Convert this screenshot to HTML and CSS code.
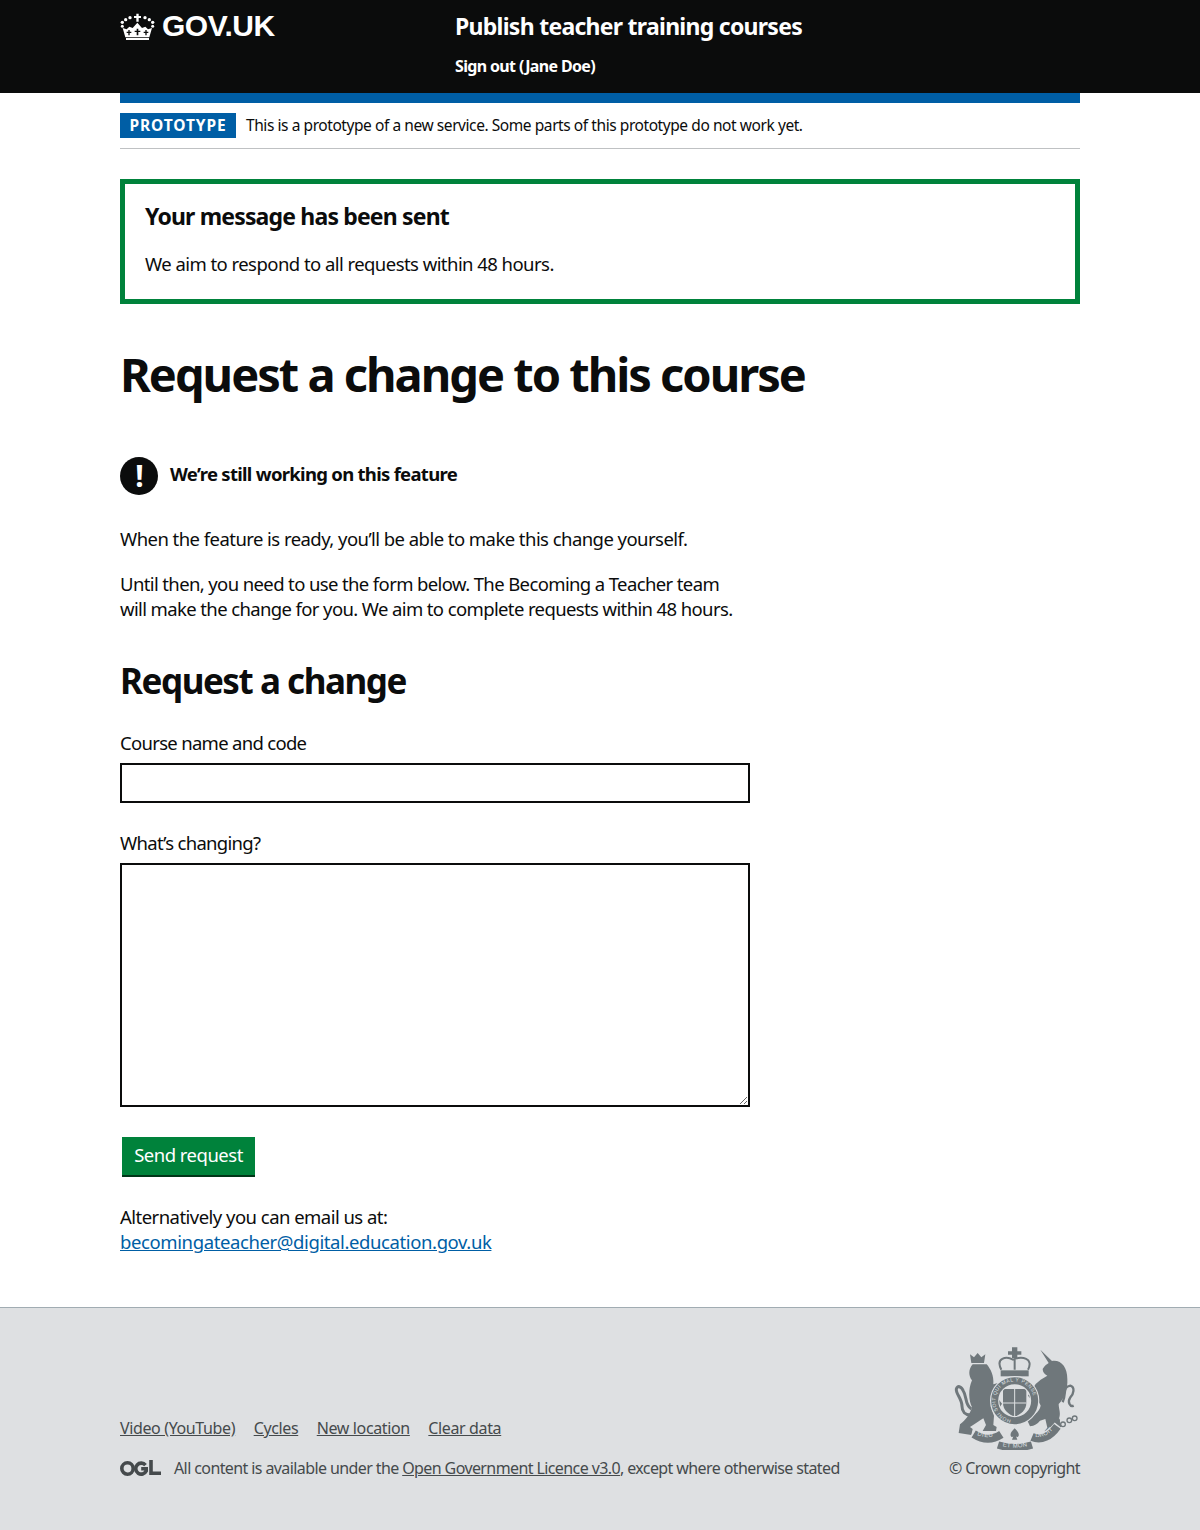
FILE: index.html
```html
<!DOCTYPE html>
<html lang="en">
<head>
    <meta charset="UTF-8">
    <meta name="viewport" content="width=device-width, initial-scale=1.0">
    <title>Request a change to this course</title>
    <link rel="stylesheet" href="styles.css">
</head>
<body>
    <header class="site-header">
        <div class="header-inner">
            <a class="logo" href="#">
                <svg class="crown" viewBox="30 33 105 81" width="35" height="27" aria-hidden="true">
                    <g fill="#fff">
                        <path d="M79 35h7v7h7v6h-7v11h-7V48h-7v-6h7z"/>
                        <circle cx="60" cy="47" r="5"/><circle cx="105" cy="47" r="5"/>
                        <circle cx="47" cy="53" r="5"/><circle cx="118" cy="53" r="5"/>
                        <circle cx="37" cy="61" r="5"/><circle cx="128" cy="61" r="5"/>
                        <circle cx="37" cy="73" r="4.500"/><circle cx="128" cy="73" r="4.500"/>
                        <path d="M38 78l12 4 8-8 10 4 14-16 14 16 10-4 8 8 12-4-8 28H46z"/>
                        <path d="M48 108h69v6H48z"/>
                    </g>
                    <g fill="#0b0c0c">
                        <path d="M55 84h4v5h5v4h-5v7h-4v-7h-5v-4h5zM80 80h5v6h6v4h-6v10h-5V90h-6v-4h6zM106 84h4v5h5v4h-5v7h-4v-7h-5v-4h5z"/>
                    </g>
                </svg>
                <span>GOV.UK</span>
            </a>
            <div class="service">
                <a class="service-name" href="#">Publish teacher training courses</a>
                <a class="sign-out" href="#">Sign out (Jane Doe)</a>
            </div>
        </div>
    </header>

    <div class="container">
        <div class="blue-bar"></div>
        <div class="phase-banner">
            <strong class="phase-tag">PROTOTYPE</strong>
            <span>This is a prototype of a new service. Some parts of this prototype do not work yet.</span>
        </div>

        <div class="success-box">
            <h2>Your message has been sent</h2>
            <p>We aim to respond to all requests within 48 hours.</p>
        </div>

        <h1>Request a change to this course</h1>

        <div class="warning">
            <span class="warning-icon">!</span>
            <strong>We’re still working on this feature</strong>
        </div>

        <div class="column">
            <p>When the feature is ready, you’ll be able to make this change yourself.</p>
            <p class="tight">Until then, you need to use the form below. The Becoming a Teacher team will make the change for you. We aim to complete requests within 48 hours.</p>
        </div>

        <h2 class="form-title">Request a change</h2>

        <form class="change-form">
            <label for="course">Course name and code</label>
            <input id="course" type="text">
            <label for="changing">What’s changing?</label>
            <textarea id="changing"></textarea>
            <button type="button">Send request</button>
        </form>

        <p class="alt-email">Alternatively you can email us at:<br><a href="#">becomingateacher@digital.education.gov.uk</a></p>
    </div>

    <footer class="site-footer">
        <div class="footer-inner">
            <div class="footer-meta">
                <ul class="footer-links">
                    <li><a href="#">Video (YouTube)</a></li>
                    <li><a href="#">Cycles</a></li>
                    <li><a href="#">New location</a></li>
                    <li><a href="#">Clear data</a></li>
                </ul>
                <div class="licence">
                    <svg class="ogl" viewBox="0 0 41 17" width="41" height="17" aria-hidden="true">
                        <g fill="none" stroke="#454a4c" stroke-width="3.600">
                            <circle cx="7.500" cy="8.500" r="5.700"/>
                            <path d="M25.500 5.200a5.500 5.500 0 1 0 .7 5.800v-2.300h-5"/>
                            <path d="M31 0v13.200h10"/>
                        </g>
                    </svg>
                    <span>All content is available under the <a href="#">Open Government Licence v3.0</a>, except where otherwise stated</span>
                </div>
            </div>
            <div class="copyright">
                <svg class="crest" viewBox="36 24 375 309" width="125" height="103" aria-hidden="true">
                    <defs>
                        <path id="garter-arc" d="M218 243a58 58 0 1 1 .1 0"/>
                        <path id="dieu-arc" d="M100 285C125 298 150 298 172 284"/>
                        <path id="mon-arc" d="M176 320Q218 332 262 320"/>
                        <path id="droit-arc" d="M274 292C298 300 320 288 340 264"/>
                    </defs>
                    <g fill="#6f777b">
                        <!-- lion -->
                        <path d="M88 72L84 46l12 9 11-13 11 13 12-9-4 26z"/>
                        <path d="M92 76C78 92 80 112 90 124C78 150 80 185 90 205C84 225 70 245 54 256L50 282L88 288L92 270L84 264C98 256 112 245 124 238L132 258L122 276L162 276L164 264L154 258L156 230C154 222 146 210 150 194L170 210L180 194L160 168L180 152L168 132L154 136C156 110 146 90 134 76Z"/>
                        <!-- unicorn -->
                        <path d="M295 32L330 66C358 62 376 85 376 120C378 150 366 180 350 195C350 210 358 225 350 240L358 262L346 282L306 278L316 266L310 240L294 245C286 255 278 260 264 262L254 240C272 232 292 220 296 200C291 190 286 175 271 185L258 170L281 135L296 122L316 110C308 105 302 100 302 90C308 80 315 75 320 72Z"/>
                        <!-- crown -->
                        <path d="M210 25h16v12h12v10h-12v10h-16V47h-12V37h12z"/>
                        <path d="M176 94h84v18h-84z"/>
                        <!-- shield -->
                        <path d="M183 150h70v42c0 22-18 34-35 42-17-8-35-20-35-42z"/>
                        <!-- fleur -->
                        <path d="M218 268c-8 8-14 14-12 22 2 5 6 4 8 2l-4 10h16l-4-10c2 2 6 3 8-2 2-8-4-14-12-22z"/>
                    </g>
                    <g fill="none" stroke="#6f777b">
                        <path d="M88 210C68 198 75 172 64 156C58 142 46 138 43 150C41 165 60 178 60 202C60 218 70 228 85 228" stroke-width="9"/>
                        <path d="M362 190C375 160 360 145 385 140C400 145 395 165 385 175C375 190 385 205 395 200" stroke-width="7"/>
                        <circle cx="345" cy="245" r="7" stroke-width="4"/>
                        <circle cx="363" cy="256" r="7" stroke-width="4"/>
                        <circle cx="382" cy="244" r="7" stroke-width="4"/>
                        <circle cx="398" cy="238" r="7" stroke-width="4"/>
                        <path d="M178 92C160 58 192 50 213 62C240 50 276 58 258 92M218 60v32" stroke-width="6"/>
                        <circle cx="218" cy="185" r="60" stroke="#dee0e2" stroke-width="28"/>
                        <circle cx="218" cy="185" r="60" stroke-width="21"/>
                    </g>
                    <!-- motto ribbon, with a light edge to lift it off the legs -->
                    <g fill="none" stroke="#dee0e2">
                        <path d="M90 284C125 304 150 304 180 286" stroke-width="30"/>
                        <path d="M264 292C298 306 325 292 350 260" stroke-width="30"/>
                    </g>
                    <g fill="none" stroke="#6f777b">
                        <path d="M95 285C125 304 150 304 178 286" stroke-width="24"/>
                        <path d="M168 318Q218 334 270 318" stroke-width="22"/>
                        <path d="M270 294C298 306 325 292 346 262" stroke-width="24"/>
                    </g>
                    <path d="M218 150v84M183 192h70" stroke="#dee0e2" stroke-width="3" fill="none"/>
                    <g class="crest-text">
                        <text font-size="15" letter-spacing="1.500"><textPath href="#garter-arc" startOffset="3%">HONI SOIT QUI MAL Y PENSE</textPath></text>
                        <text font-size="18" letter-spacing="2"><textPath href="#dieu-arc" startOffset="6">DIEU</textPath></text>
                        <text font-size="18" letter-spacing="1"><textPath href="#mon-arc" startOffset="6">ET MON</textPath></text>
                        <text font-size="18" letter-spacing="1"><textPath href="#droit-arc" startOffset="6">DROIT</textPath></text>
                    </g>
                </svg>
                <a href="#">© Crown copyright</a>
            </div>
        </div>
    </footer>
</body>
</html>
```
FILE: styles.css
```css
* {
    box-sizing: border-box;
}
body {
    font-family: "Noto Sans", Arial, sans-serif;
    font-size: 18.5px;
    line-height: 25px;
    color: #0b0c0c;
    margin: 0;
    padding: 0;
    background-color: #fff;
}
a {
    color: inherit;
}
.site-header {
    background-color: #0b0c0c;
    color: #fff;
    height: 93px;
}
.header-inner {
    width: 960px;
    margin: 0 auto;
    display: flex;
}
.logo {
    width: 335px;
    display: flex;
    align-items: center;
    gap: 7px;
    height: 52px;
    font-family: "Liberation Sans", Arial, sans-serif;
    font-weight: 700;
    font-size: 30px;
    letter-spacing: -0.5px;
    text-decoration: none;
}
.logo span {
    margin-top: -2px;
}
.crown {
    flex: none;
}
.service {
    display: flex;
    flex-direction: column;
    padding-top: 11px;
}
.service a {
    text-decoration: none;
    font-weight: 700;
}
.service-name {
    font-size: 23px;
    line-height: 30px;
    letter-spacing: -0.73px;
}
.sign-out {
    font-size: 16px;
    line-height: 20px;
    margin-top: 15px;
    letter-spacing: -0.65px;
}
.container {
    width: 960px;
    margin: 0 auto;
}
.blue-bar {
    height: 10px;
    background-color: #005ea5;
}
.phase-banner {
    height: 46px;
    border-bottom: 1px solid #bfc1c3;
    display: flex;
    align-items: center;
    gap: 10px;
    font-size: 15.5px;
    padding-bottom: 1px;
    letter-spacing: -0.43px;
}
.phase-tag {
    background-color: #005ea5;
    color: #fff;
    width: 116px;
    height: 25px;
    line-height: 25px;
    text-align: center;
    letter-spacing: 0.9px;
    font-size: 15.5px;
}
.success-box {
    margin-top: 30px;
    height: 125px;
    border: 5px solid #00823b;
    padding: 18px 20px;
}
.success-box h2 {
    font-size: 23px;
    line-height: 28px;
    margin: 0 0 21px;
    letter-spacing: -0.83px;
}
.success-box p {
    margin: 0;
    letter-spacing: -0.55px;
}
h1 {
    font-size: 47px;
    line-height: 50px;
    margin: 45px 0 0;
    letter-spacing: -2px;
}
.warning {
    margin-top: 58px;
    height: 38px;
    display: flex;
    align-items: center;
    gap: 12px;
    letter-spacing: -0.71px;
}
.warning strong {
    margin-top: -5px;
}
.warning-icon {
    width: 38px;
    height: 38px;
    border-radius: 50%;
    background-color: #0b0c0c;
    color: #fff;
    font-weight: 700;
    font-size: 30px;
    line-height: 38px;
    text-align: center;
}
.column {
    width: 620px;
    margin-top: 31px;
    letter-spacing: -0.55px;
}
.column p {
    margin: 0 0 20px;
}
.column .tight {
    letter-spacing: -0.62px;
}
.form-title {
    font-size: 35px;
    line-height: 40px;
    margin: 40px 0 0;
    letter-spacing: -1.45px;
}
.change-form {
    width: 630px;
    margin-top: 29px;
    display: flex;
    flex-direction: column;
    align-items: flex-start;
}
.change-form label {
    letter-spacing: -0.7px;
    margin-bottom: 8px;
}
.change-form input,
.change-form textarea {
    display: block;
    width: 630px;
    border: 2px solid #0b0c0c;
    border-radius: 0;
    padding: 5px;
    font: inherit;
    margin: 0 0 27px;
}
.change-form input {
    height: 40px;
}
.change-form textarea {
    height: 244px;
    margin-bottom: 30px;
}
.change-form button {
    margin-left: 2px;
    width: 133px;
    height: 40px;
    background-color: #00823b;
    border: 0;
    border-bottom: 2px solid #003618;
    border-radius: 0;
    color: #fff;
    font: inherit;
    letter-spacing: -0.5px;
    padding: 0 0 3px;
}
.alt-email {
    margin: 27px 0 53px;
    letter-spacing: -0.53px;
}
.alt-email a {
    color: #005ea5;
    letter-spacing: -0.39px;
}
.site-footer {
    background-color: #dee0e2;
    border-top: 1px solid #a1acb2;
    height: 223px;
    color: #454a4c;
    font-size: 16px;
    letter-spacing: -0.6px;
}
.footer-inner {
    width: 960px;
    margin: 0 auto;
    display: flex;
    justify-content: space-between;
    align-items: flex-end;
    height: 173px;
}
.footer-links {
    list-style: none;
    margin: 0 0 15px;
    padding: 0;
    display: flex;
    gap: 18.5px;
    letter-spacing: -0.37px;
}
.licence {
    display: flex;
    align-items: center;
    gap: 13px;
}
.ogl {
    flex: none;
}
.copyright {
    display: flex;
    flex-direction: column;
    align-items: center;
}
.copyright a {
    text-decoration: none;
}
.crest {
    margin: 0 0 6px 3px;
}
.crest-text {
    font-family: "Liberation Sans", Arial, sans-serif;
    fill: #dee0e2;
}
```
